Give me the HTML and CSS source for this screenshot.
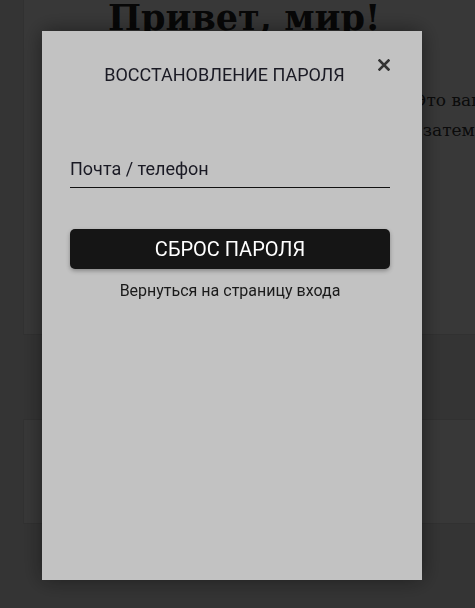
FILE: index.html
```html
<!DOCTYPE html>
<html lang="ru">
<head>
    <meta charset="UTF-8">
    <meta name="viewport" content="width=device-width, initial-scale=1.0">
    <title>Восстановление пароля</title>
    <link rel="stylesheet" href="styles.css">
</head>
<body>
    <div class="site">
        <article class="post">
            <h1 class="post-title">Привет, мир!</h1>
            <p class="post-text">Добро пожаловать в WordPress. Это ваша первая запись.<br>Отредактируйте или удалите её, затем начинайте создавать!</p>
        </article>
        <section class="widget"></section>
    </div>

    <div class="overlay">
        <div class="modal">
            <button class="modal-close" type="button" aria-label="Закрыть">
                <svg width="12" height="12" viewBox="0 0 12 12">
                    <path d="M1.5 1.5 L10.5 10.5 M10.5 1.5 L1.5 10.5" stroke="#333" stroke-width="2.6" stroke-linecap="square"/>
                </svg>
            </button>
            <h2 class="modal-title">ВОССТАНОВЛЕНИЕ ПАРОЛЯ</h2>
            <input class="modal-input" type="text" placeholder="Почта / телефон">
            <button class="modal-submit" type="button">СБРОС ПАРОЛЯ</button>
            <a class="modal-link" href="#">Вернуться на страницу входа</a>
        </div>
    </div>
</body>
</html>
```

FILE: styles.css
```css
html, body {
    margin: 0;
    height: 100%;
    overflow: hidden;
}

body {
    background: #ececec;
    font-family: "DejaVu Serif", serif;
    color: #333;
}

.site {
    padding-left: 23px;
    margin-top: -50px;
    width: 800px;
}

.post {
    background: #fff;
    border: 1px solid #ddd;
    height: 385px;
    box-sizing: border-box;
}

.post-title {
    margin: 43px 0 0 84px;
    font-size: 35px;
    font-weight: bold;
    color: #222;
    line-height: 48px;
}

.post-text {
    margin: 43px 0 0 98px;
    font-size: 17px;
    line-height: 30px;
    color: #333;
}

.widget {
    margin-top: 84px;
    height: 105px;
    background: #fff;
    border: 1px solid #ddd;
    box-sizing: border-box;
}

.overlay {
    position: fixed;
    inset: 0;
    background: rgba(0, 0, 0, 0.78);
}

.modal {
    position: relative;
    box-sizing: border-box;
    width: 380px;
    height: 549px;
    margin: 31px 0 0 42px;
    padding: 33px 32px 0 28px;
    background: #c2c2c2;
    box-shadow: 0 0 20px rgba(0, 0, 0, 0.45);
    font-family: Roboto, sans-serif;
    display: flex;
    flex-direction: column;
}

.modal-close {
    position: absolute;
    top: 28px;
    right: 32px;
    border: none;
    background: none;
    padding: 0;
    width: 12px;
    height: 12px;
    line-height: 0;
    cursor: pointer;
}

.modal-title {
    margin: 0 11px 0 0;
    text-align: center;
    font-size: 18px;
    font-weight: normal;
    line-height: 22px;
    color: #1a1a24;
}

.modal-input {
    margin-top: 64px;
    padding: 8px 0;
    border: none;
    border-bottom: 1px solid #111;
    background: transparent;
    font-family: Roboto, sans-serif;
    font-size: 18px;
    line-height: 21px;
    height: 38px;
    box-sizing: border-box;
    color: #1a1a24;
    outline: none;
}

.modal-input::placeholder {
    color: #1a1a24;
    opacity: 1;
}

.modal-submit {
    margin-top: 41px;
    height: 40px;
    flex-shrink: 0;
    border: none;
    border-radius: 5px;
    background: #151515;
    color: #fff;
    font-family: Roboto, sans-serif;
    font-size: 20px;
    box-shadow: 0 2px 4px rgba(0, 0, 0, 0.3);
    cursor: pointer;
}

.modal-link {
    margin-top: 12px;
    text-align: center;
    font-size: 16px;
    line-height: 20px;
    color: #1a1a1a;
    text-decoration: none;
}
```
